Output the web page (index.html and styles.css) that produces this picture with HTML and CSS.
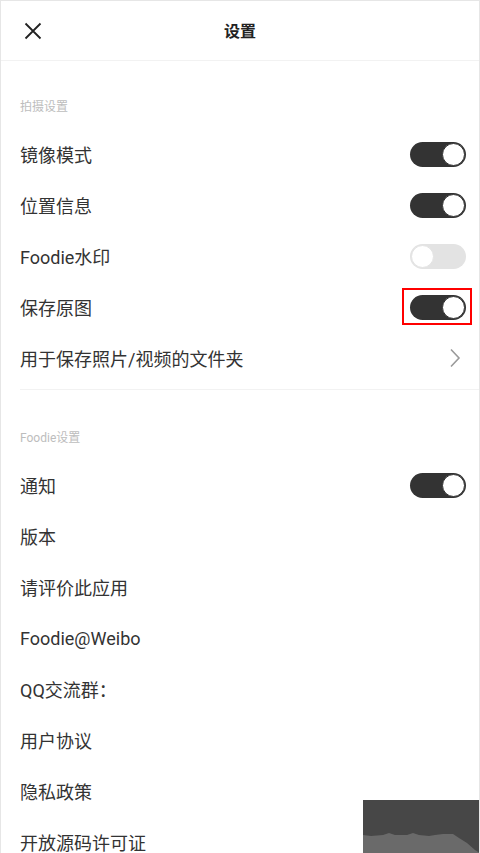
FILE: index.html
```html
<!DOCTYPE html>
<html lang="zh-CN">
<head>
    <meta charset="UTF-8">
    <meta name="viewport" content="width=device-width, initial-scale=1.0">
    <title>设置</title>
    <link rel="stylesheet" href="styles.css">
</head>
<body>

    <div class="screen">
        <div class="header">
            <svg class="close" width="18" height="18" viewBox="0 0 18 18">
                <path d="M1.5 1.5 L16.5 16.5 M16.5 1.5 L1.5 16.5" stroke="#222" stroke-width="1.8" fill="none"/>
            </svg>
            <div class="title">设置</div>
        </div>

        <div class="section">
            <div class="section-label">拍摄设置</div>
            <div class="row"><span>镜像模式</span><div class="switch on"></div></div>
            <div class="row"><span>位置信息</span><div class="switch on"></div></div>
            <div class="row"><span>Foodie水印</span><div class="switch"></div></div>
            <div class="row"><span>保存原图</span><div class="switch on marked"></div></div>
            <div class="row"><span>用于保存照片/视频的文件夹</span>
                <svg class="chevron" width="12" height="20" viewBox="0 0 12 20">
                    <path d="M2 1.5 L10 10 L2 18.5" stroke="#9a9a9a" stroke-width="1.6" fill="none"/>
                </svg>
            </div>
        </div>

        <div class="section second">
            <div class="section-label">Foodie设置</div>
            <div class="row"><span>通知</span><div class="switch on"></div></div>
            <div class="row"><span>版本</span></div>
            <div class="row"><span>请评价此应用</span></div>
            <div class="row"><span>Foodie@Weibo</span></div>
            <div class="row"><span>QQ交流群：</span></div>
            <div class="row"><span>用户协议</span></div>
            <div class="row"><span>隐私政策</span></div>
            <div class="row"><span>开放源码许可证</span></div>
        </div>

        <svg class="corner" width="117" height="53" viewBox="0 0 117 53">
            <rect width="117" height="53" fill="#474747"/>
            <path d="M0 35 L8 36 L20 35 L26 33 L32 35 L44 35 L50 33 L56 35 L66 36 L72 35 L80 34 L90 34 L96 38 L104 43 L112 50 L117 53 L0 53 Z" fill="#6a6a6a"/>
        </svg>
    </div>

</body>
</html>
```

FILE: styles.css
```css
body {
    margin: 0;
    font-family: Roboto, "Noto Sans CJK SC", sans-serif;
    background: #fff;
    color: #333;
}
.screen {
    position: relative;
    width: 480px;
    height: 853px;
    box-sizing: border-box;
    border: 1px solid #e6e6e6;
    border-bottom: none;
    overflow: hidden;
}
.header {
    position: relative;
    height: 59px;
    border-bottom: 1px solid #f2f2f2;
    display: flex;
    align-items: center;
    justify-content: center;
}
.close {
    position: absolute;
    left: 23px;
    top: 21px;
}
.title {
    font-size: 16px;
    font-weight: bold;
    color: #222;
    padding-bottom: 2px;
}
.section {
    padding-top: 36px;
    padding-bottom: 4px;
    margin-left: 19px;
    border-bottom: 1px solid #f2f2f2;
}
.section.second {
    padding-top: 38px;
    border-bottom: none;
}
.section-label {
    height: 20px;
    line-height: 20px;
    font-size: 12px;
    color: #bdbdbd;
    margin-bottom: 13px;
}
.row {
    height: 48px;
    padding-bottom: 3px;
    display: flex;
    align-items: center;
    justify-content: space-between;
    padding-right: 13px;
    font-size: 18px;
    color: #333;
}
.chevron {
    margin-right: 5px;
}
.switch {
    position: relative;
    width: 56px;
    height: 25px;
    border-radius: 13px;
    background: #e3e3e3;
}
.switch::after {
    content: "";
    position: absolute;
    left: 1px;
    top: 1px;
    width: 23px;
    height: 23px;
    box-sizing: border-box;
    border-radius: 50%;
    background: #fff;
    border: 1px solid #e3e3e3;
}
.switch.on {
    background: #333;
}
.switch.on::after {
    left: auto;
    right: 1px;
    border: 1.5px solid #333;
}
.switch.marked::before {
    content: "";
    position: absolute;
    left: -8px;
    top: -7px;
    width: 70px;
    height: 37px;
    box-sizing: border-box;
    border: 2px solid #f00;
}
.corner {
    position: absolute;
    right: -1px;
    bottom: 0;
    display: block;
}
```
